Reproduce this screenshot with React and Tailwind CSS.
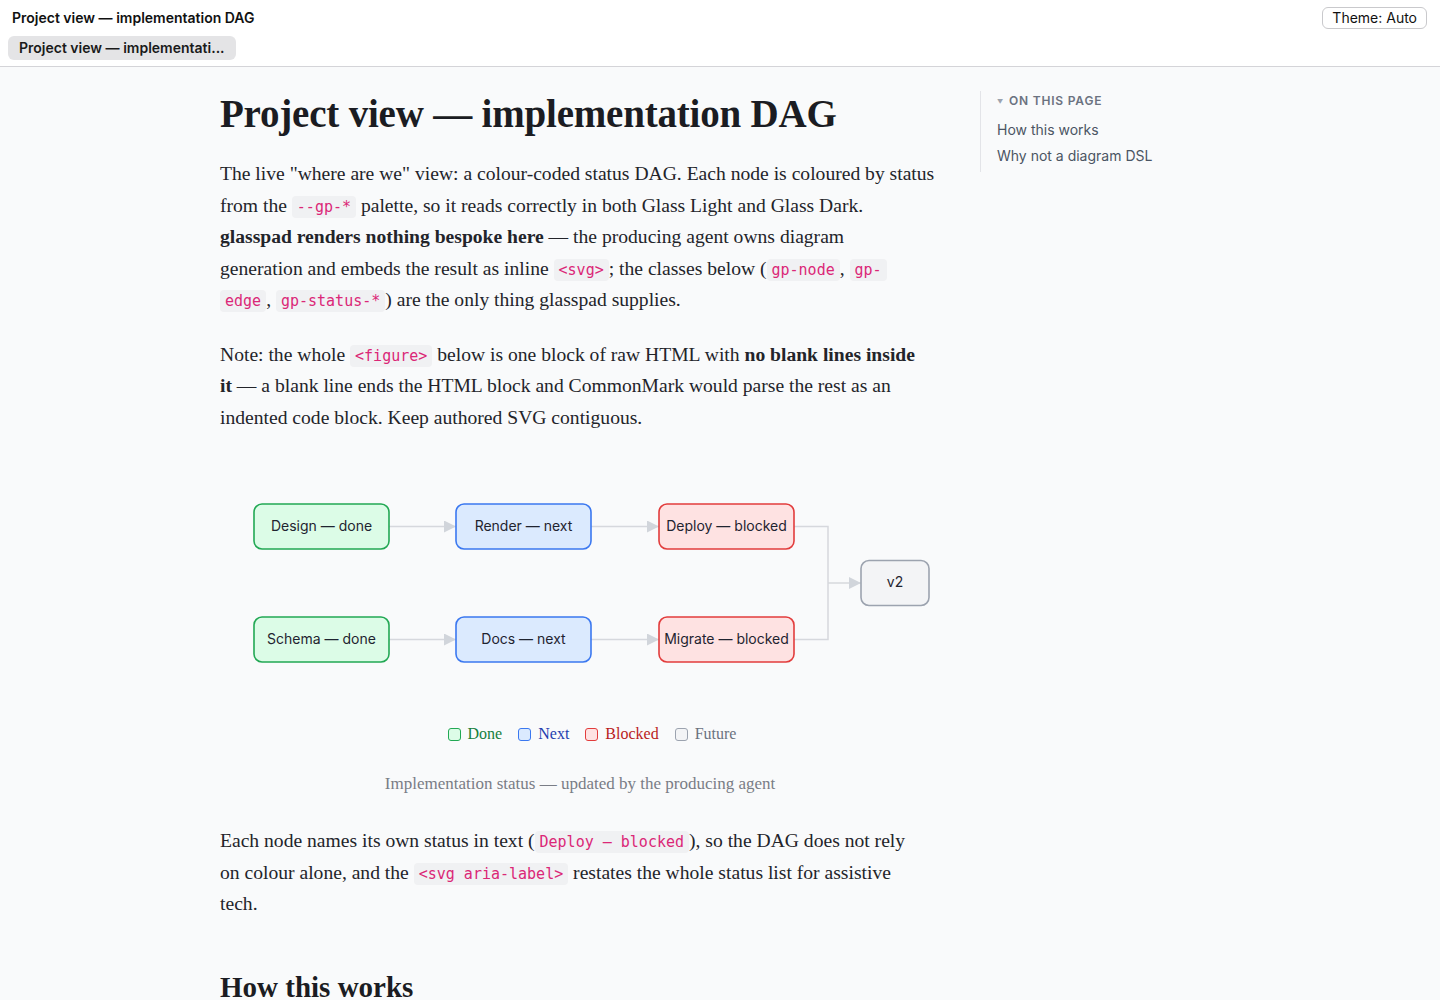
import React from 'react';

const serif = { fontFamily: '"Liberation Serif", "DejaVu Serif", serif' };

const Code = ({ children }) => (
  <code className="rounded bg-[#f0f1f3] px-[5px] py-[2px] font-['DejaVu_Sans_Mono',monospace] text-[15px] leading-none text-[#db2777]">
    {children}
  </code>
);

const nodes = [
  { x: 34, y: 24, label: 'Design — done', s: 'done' },
  { x: 236, y: 24, label: 'Render — next', s: 'next' },
  { x: 439, y: 24, label: 'Deploy — blocked', s: 'blocked' },
  { x: 34, y: 137, label: 'Schema — done', s: 'done' },
  { x: 236, y: 137, label: 'Docs — next', s: 'next' },
  { x: 439, y: 137, label: 'Migrate — blocked', s: 'blocked' },
];

const palette = {
  done: { fill: '#dcfce7', stroke: '#22a854' },
  next: { fill: '#dbeafe', stroke: '#3b78f0' },
  blocked: { fill: '#fee2e2', stroke: '#e23c3c' },
  future: { fill: '#f3f4f6', stroke: '#9ca3af' },
};

const Dag = () => (
  <svg
    width="720"
    height="210"
    viewBox="0 0 720 210"
    aria-label="Design done, Schema done, Render next, Docs next, Deploy blocked, Migrate blocked, v2 future"
    className="block"
  >
    <defs>
      <marker id="arrow" viewBox="0 0 10 10" refX="10" refY="5" markerWidth="12" markerHeight="12" markerUnits="userSpaceOnUse" orient="auto">
        <path d="M0 0 L10 5 L0 10 Z" fill="#d1d5db" />
      </marker>
    </defs>
    <g stroke="#d6d8dd" strokeWidth="1.5" fill="none">
      <path d="M169 46.5 H236" markerEnd="url(#arrow)" />
      <path d="M371 46.5 H439" markerEnd="url(#arrow)" />
      <path d="M169 159.5 H236" markerEnd="url(#arrow)" />
      <path d="M371 159.5 H439" markerEnd="url(#arrow)" />
      <path d="M574 46.5 H608 V159.5 H574" />
      <path d="M608 103 H641" markerEnd="url(#arrow)" />
    </g>
    {nodes.map((n) => (
      <g key={n.label}>
        <rect
          x={n.x}
          y={n.y}
          width="135"
          height="45"
          rx="8"
          fill={palette[n.s].fill}
          stroke={palette[n.s].stroke}
          strokeWidth="1.6"
        />
        <text
          x={n.x + 67.5}
          y={n.y + 23}
          textAnchor="middle"
          dominantBaseline="middle"
          fontFamily="Inter, 'Liberation Sans', sans-serif"
          fontSize="14"
          fill="#1f2430"
        >
          {n.label}
        </text>
      </g>
    ))}
    <rect x="641" y="80.5" width="68" height="45" rx="8" fill="#f3f4f6" stroke="#9ca3af" strokeWidth="1.6" />
    <text x="675" y="103.5" textAnchor="middle" dominantBaseline="middle" fontFamily="Inter, 'Liberation Sans', sans-serif" fontSize="14" fill="#1f2430">
      v2
    </text>
  </svg>
);

const Legend = () => {
  const items = [
    { label: 'Done', box: 'border-[#22a854] bg-[#dcfce7]', text: 'text-[#15803d]' },
    { label: 'Next', box: 'border-[#3b78f0] bg-[#dbeafe]', text: 'text-[#1e40af]' },
    { label: 'Blocked', box: 'border-[#e23c3c] bg-[#fee2e2]', text: 'text-[#b91c1c]' },
    { label: 'Future', box: 'border-[#9ca3af] bg-[#f3f4f6]', text: 'text-[#6b7280]' },
  ];
  return (
    <div className="flex justify-center gap-4 pl-6 text-[16px] leading-6" style={serif}>
      {items.map((i) => (
        <span key={i.label} className={`flex items-center gap-[7px] ${i.text}`}>
          <span className={`inline-block h-[13px] w-[13px] rounded-[3px] border ${i.box}`} />
          {i.label}
        </span>
      ))}
    </div>
  );
};

export default function App() {
  return (
    <div className="min-h-screen bg-[#f9fafb] font-['Inter','Liberation_Sans',sans-serif]">
      <header className="relative h-[67px] border-b border-[#d4d4d8] bg-white">
        <div className="px-3 pt-[8px] text-[14px] leading-5 font-semibold text-[#111]">Project view — implementation DAG</div>
        <div className="ml-2 mt-[8px] inline-block whitespace-nowrap rounded-md bg-[#e4e4e6] px-[11px] py-[2px] text-[14px] leading-5 font-semibold text-[#1a1a1a]">
          Project view — implementati...
        </div>
        <button className="absolute right-[13px] top-[7px] rounded-md border border-[#c9c9cc] bg-white px-[9px] py-0 text-[14px] leading-5 text-[#111]">
          Theme: Auto
        </button>
      </header>

      <div className="mx-auto grid max-w-[1000px] grid-cols-[720px_1fr] gap-10">
        <main className="pb-10 text-[19.6px] leading-[31.5px] text-[#23242a]" style={serif}>
          <h1 className="mt-[23px] mb-[20px] text-[39px] leading-[48px] font-semibold tracking-[-0.2px] text-[#1b1c22]">
            Project view — implementation DAG
          </h1>
          <p className="whitespace-nowrap">
            The live "where are we" view: a colour-coded status DAG. Each node is coloured by status
            <br />
            from the <Code>--gp-*</Code> palette, so it reads correctly in both Glass Light and Glass Dark.
            <br />
            <strong>glasspad renders nothing bespoke here</strong> — the producing agent owns diagram
            <br />
            generation and embeds the result as inline <Code>&lt;svg&gt;</Code>; the classes below (<Code>gp-node</Code>,{' '}
            <Code>gp-</Code>
            <br />
            <Code>edge</Code>, <Code>gp-status-*</Code>) are the only thing glasspad supplies.
          </p>
          <p className="mt-[23px] whitespace-nowrap">
            Note: the whole <Code>&lt;figure&gt;</Code> below is one block of raw HTML with <strong>no blank lines inside</strong>
            <br />
            <strong>it</strong> — a blank line ends the HTML block and CommonMark would parse the rest as an
            <br />
            indented code block. Keep authored SVG contiguous.
          </p>

          <figure className="mt-[47px]">
            <Dag />
            <div className="mt-[32px]">
              <Legend />
            </div>
            <figcaption className="mt-[26px] text-center text-[17px] leading-6 text-[#7a7d86]">
              Implementation status — updated by the producing agent
            </figcaption>
          </figure>

          <p className="mt-[29px] whitespace-nowrap">
            Each node names its own status in text (<Code>Deploy — blocked</Code>), so the DAG does not rely
            <br />
            on colour alone, and the <Code>&lt;svg aria-label&gt;</Code> restates the whole status list for assistive
            <br />
            tech.
          </p>

          <h2 className="mt-[49px] text-[29px] leading-[36px] font-semibold text-[#1b1c22]">How this works</h2>
        </main>

        <aside className="pt-[24px]">
          <nav className="border-l border-[#e3e4e8] pl-4 pb-[6px]">
            <div className="flex items-center gap-[5px] pt-[1px] text-[12px] font-semibold tracking-[0.8px] text-[#6b7280]">
              <span className="text-[6px] text-[#9ca3af]">▼</span>
              ON THIS PAGE
            </div>
            <ul className="mt-[9px] space-y-[5px] text-[14px] text-[#4b5563]">
              <li>How this works</li>
              <li>Why not a diagram DSL</li>
            </ul>
          </nav>
        </aside>
      </div>
    </div>
  );
}
